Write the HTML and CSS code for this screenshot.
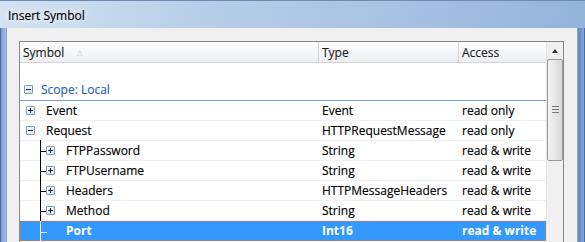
FILE: index.html
```html
<!DOCTYPE html>
<html>
<head>
<meta charset="utf-8">
<link rel="stylesheet" href="styles.css">
</head>
<body>
<div class="window">
  <div class="titlebar"><span class="title">Insert Symbol</span></div>
  <div class="frame">
    <div class="edge-left"></div>
    <div class="client">
      <div class="listview">
        <div class="list">
          <div class="header">
            <div class="hcell c1">Symbol <span class="sort">&#9651;</span></div>
            <div class="hcell c2">Type</div>
            <div class="hcell c3">Access</div>
          </div>
          <div class="group">
            <span class="box minus"></span><span class="group-label">Scope: Local</span>
          </div>
          <div class="row">
            <div class="cell c1"><span class="box plus"></span><span class="name">Event</span></div>
            <div class="cell c2">Event</div>
            <div class="cell c3">read only</div>
          </div>
          <div class="row">
            <div class="cell c1"><span class="box minus"></span><span class="name">Request</span></div>
            <div class="cell c2">HTTPRequestMessage</div>
            <div class="cell c3">read only</div>
          </div>
          <div class="row child">
            <div class="cell c1"><span class="tree"></span><span class="box plus"></span><span class="name">FTPPassword</span></div>
            <div class="cell c2">String</div>
            <div class="cell c3">read &amp; write</div>
          </div>
          <div class="row child">
            <div class="cell c1"><span class="tree"></span><span class="box plus"></span><span class="name">FTPUsername</span></div>
            <div class="cell c2">String</div>
            <div class="cell c3">read &amp; write</div>
          </div>
          <div class="row child">
            <div class="cell c1"><span class="tree"></span><span class="box plus"></span><span class="name">Headers</span></div>
            <div class="cell c2">HTTPMessageHeaders</div>
            <div class="cell c3">read &amp; write</div>
          </div>
          <div class="row child">
            <div class="cell c1"><span class="tree"></span><span class="box plus"></span><span class="name">Method</span></div>
            <div class="cell c2">String</div>
            <div class="cell c3">read &amp; write</div>
          </div>
          <div class="row child selected">
            <div class="cell c1"><span class="tree leaf"></span><span class="nobox"></span><span class="name">Port</span></div>
            <div class="cell c2">Int16</div>
            <div class="cell c3">read &amp; write</div>
          </div>
        </div>
        <div class="scrollbar">
          <div class="arrow-up"></div>
          <div class="thumb"><span class="grip"></span></div>
          <div class="track"></div>
        </div>
      </div>
    </div>
    <div class="edge-right"></div>
  </div>
</div>
</body>
</html>
```

FILE: styles.css
```css
* { box-sizing: border-box; }
html, body { margin: 0; padding: 0; }
body {
  width: 585px;
  height: 242px;
  overflow: hidden;
  font-family: "Open Sans", "Noto Sans", sans-serif;
  font-size: 12px;
  color: #000;
  background: #f0f0f0;
  -webkit-text-stroke: 0.15px currentColor;
}
.window {
  width: 585px;
  height: 242px;
  display: flex;
  flex-direction: column;
  overflow: hidden;
  background: linear-gradient(100deg, #d5e3f3 0%, #b9cfe9 30%, #a9c3e3 60%, #90b0da 100%);
}
.titlebar {
  height: 28px;
  flex: none;
  padding: 6px 0 0 8px;
  border-top: 1px solid #6f8bb4;
}
.title {
  font-size: 12px;
  color: #000;
  text-shadow: 0 0 8px #fff, 0 0 6px #fff;
}
.frame {
  flex: 1;
  display: flex;
  min-height: 0;
}
.edge-left {
  width: 7px;
  flex: none;
  border-left: 1px solid #4d6c9a;
  border-right: 1px solid #8aa3c4;
  background: linear-gradient(90deg, #7f9ccb, #a4bddd);
}
.edge-right {
  width: 8px;
  flex: none;
  border-left: 1px solid #8aa3c4;
  border-right: 1px solid #4d6c9a;
  background: linear-gradient(90deg, #5f86c3, #86a6d3);
}
.client {
  flex: 1;
  background: #f0f0f0;
  padding: 13px 13px 0 12px;
  min-width: 0;
  overflow: hidden;
}
.listview {
  display: flex;
  height: 201px;
  border: 1px solid #828790;
  border-bottom: none;
  background: #fff;
  overflow: hidden;
}
.list {
  flex: 1;
  min-width: 0;
}
.header {
  display: flex;
  height: 21px;
  background: linear-gradient(#ffffff, #f6f7f9 50%, #eceef2);
  border-bottom: 1px solid #d5d5d5;
}
.hcell {
  padding: 2px 0 0 3px;
  border-right: 1px solid #d5d5d5;
  color: #1e1e1e;
}
.hcell.c3 { border-right: none; }
.c1 { width: 299px; flex: none; }
.c2 { width: 140px; flex: none; }
.c3 { flex: 1; }
.sort {
  font-size: 7px;
  color: #b8bcc4;
  margin-left: 10px;
  position: relative;
  top: -2px;
  -webkit-text-stroke: 0;
}
.group {
  height: 38px;
  display: flex;
  align-items: flex-end;
  padding: 0 0 2px 4px;
  border-bottom: 1px solid #7aa1d0;
}
.group-label {
  color: #2e5fb8;
  margin-left: 8px;
  line-height: 16px;
}
.group .box { margin-bottom: 4px; }
.row {
  display: flex;
  height: 20px;
  border-bottom: 1px solid #f0f0f0;
  line-height: 19px;
}
.cell {
  padding-left: 3px;
  white-space: nowrap;
}
.row .c1 {
  display: flex;
  align-items: center;
  padding-left: 6px;
}
.row .name { margin-left: 11px; }
.box {
  display: inline-block;
  width: 9px;
  height: 9px;
  flex: none;
  border: 1px solid #7f9db9;
  border-radius: 1px;
  background: linear-gradient(135deg, #ffffff, #d6dfea);
  position: relative;
}
.box::before {
  content: "";
  position: absolute;
  left: 1px;
  top: 3px;
  width: 5px;
  height: 1px;
  background: #1a2a45;
}
.box.plus::after {
  content: "";
  position: absolute;
  left: 3px;
  top: 1px;
  width: 1px;
  height: 5px;
  background: #1a2a45;
}
.child .c1 { padding-left: 0; }
.tree {
  width: 26px;
  height: 20px;
  flex: none;
  position: relative;
  align-self: stretch;
}
.tree::before {
  content: "";
  position: absolute;
  left: 20px;
  top: -1px;
  bottom: -1px;
  width: 1px;
  background: #000;
}
.tree::after {
  content: "";
  position: absolute;
  left: 20px;
  top: 10px;
  width: 6px;
  height: 1px;
  background: #000;
}
.tree.leaf::before { background: #fff; }
.tree.leaf::after { background: #fff; width: 7px; }
.nobox { width: 9px; flex: none; }
.child .name { margin-left: 11px; }
.selected {
  background: #3399ff;
  color: #fff;
  font-weight: bold;
  border: 1px dotted #e07a1f;
  line-height: 18px;
  -webkit-text-stroke: 0;
}
.selected .c1 { margin-left: -1px; }
.scrollbar {
  width: 17px;
  flex: none;
  display: flex;
  flex-direction: column;
  background: #f0f0f0;
  border-left: 1px solid #e6e6e6;
}
.arrow-up {
  height: 17px;
  position: relative;
}
.arrow-up::after {
  content: "";
  position: absolute;
  left: 5px;
  top: 7px;
  border-left: 3px solid transparent;
  border-right: 3px solid transparent;
  border-bottom: 4px solid #333;
}
.thumb {
  height: 102px;
  flex: none;
  border: 1px solid #999;
  border-radius: 2px;
  background: linear-gradient(90deg, #f4f4f4, #e6e6e6 50%, #d8d8d8);
  position: relative;
}
.grip {
  position: absolute;
  left: 4px;
  top: 46px;
  width: 7px;
  height: 7px;
  border-top: 1px solid #777;
  border-bottom: 1px solid #777;
}
.grip::after {
  content: "";
  position: absolute;
  left: 0;
  top: 2px;
  width: 7px;
  height: 1px;
  background: #777;
}
.track { flex: 1; }
```
